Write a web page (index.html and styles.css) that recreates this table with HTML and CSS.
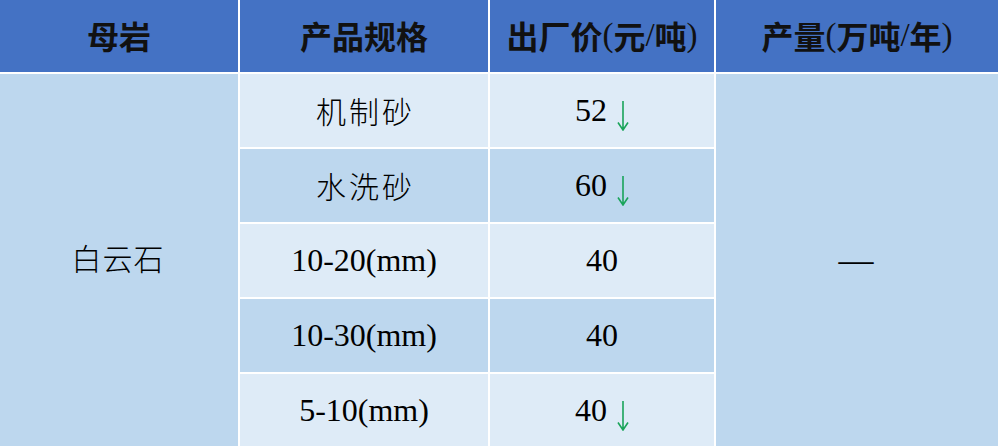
FILE: index.html
```html
<!DOCTYPE html>
<html lang="zh-CN">
<head>
<meta charset="utf-8">
<title>白云石</title>
<link rel="stylesheet" href="styles.css">
</head>
<body>
<div class="table">
  <div class="th">母岩</div>
  <div class="th">产品规格</div>
  <div class="th">出厂价<span class="lat">(</span>元<span class="lat">/</span>吨<span class="lat">)</span></div>
  <div class="th">产量<span class="lat">(</span>万吨<span class="lat">/</span>年<span class="lat">)</span></div>

  <div class="cell rock">白云石</div>

  <div class="cell light cn">机制砂</div>
  <div class="cell light num">52<svg class="arrow" viewBox="0 0 12 30"><path d="M6 0V28.5M1 21.5L6 29L11 21.5"/></svg></div>

  <div class="cell dark cn">水洗砂</div>
  <div class="cell dark num">60<svg class="arrow" viewBox="0 0 12 30"><path d="M6 0V28.5M1 21.5L6 29L11 21.5"/></svg></div>

  <div class="cell light num">10-20(mm)</div>
  <div class="cell light num">40</div>

  <div class="cell dark num">10-30(mm)</div>
  <div class="cell dark num">40</div>

  <div class="cell light num">5-10(mm)</div>
  <div class="cell light num">40<svg class="arrow" viewBox="0 0 12 30"><path d="M6 0V28.5M1 21.5L6 29L11 21.5"/></svg></div>

  <div class="cell output">—</div>
</div>
</body>
</html>
```

FILE: styles.css
```css
html, body {
  margin: 0;
  padding: 0;
  background: #ffffff;
}

.table {
  width: 998px;
  height: 447px;
  display: grid;
  grid-template-columns: 238px 248px 224px 1fr;
  grid-template-rows: 72px repeat(5, 1fr);
  gap: 2px;
  background: #ffffff;
}

.th {
  background: #4472c4;
  color: #111111;
  font-family: "Noto Sans CJK SC", sans-serif;
  font-weight: 700;
  font-size: 32px;
  display: flex;
  align-items: center;
  justify-content: center;
  padding-bottom: 2px;
}

.lat {
  font-family: "Liberation Serif", serif;
  font-weight: 400;
  font-size: 33px;
}

.cell {
  display: flex;
  align-items: center;
  justify-content: center;
  color: #000000;
  font-family: "Liberation Serif", "Noto Sans CJK SC", serif;
  font-size: 32px;
}

.cn {
  font-family: "Noto Sans CJK SC", sans-serif;
  font-weight: 300;
  font-size: 30px;
  letter-spacing: 3px;
  padding-left: 3px;
  padding-bottom: 2px;
}

.rock {
  grid-column: 1;
  grid-row: 2 / 7;
  background: #bdd7ee;
  font-family: "Noto Sans CJK SC", sans-serif;
  font-weight: 300;
  font-size: 30px;
  letter-spacing: 1px;
  padding-right: 2px;
  padding-bottom: 8px;
}

.output {
  grid-column: 4;
  grid-row: 2 / 7;
  background: #bdd7ee;
  font-size: 35px;
  padding-right: 2px;
}

.light {
  background: #deebf7;
}

.dark {
  background: #bdd7ee;
}

.arrow {
  width: 12px;
  height: 30px;
  margin-left: 10px;
  position: relative;
  top: 5px;
  fill: none;
  stroke: #1aa45a;
  stroke-width: 1.6;
}
```
